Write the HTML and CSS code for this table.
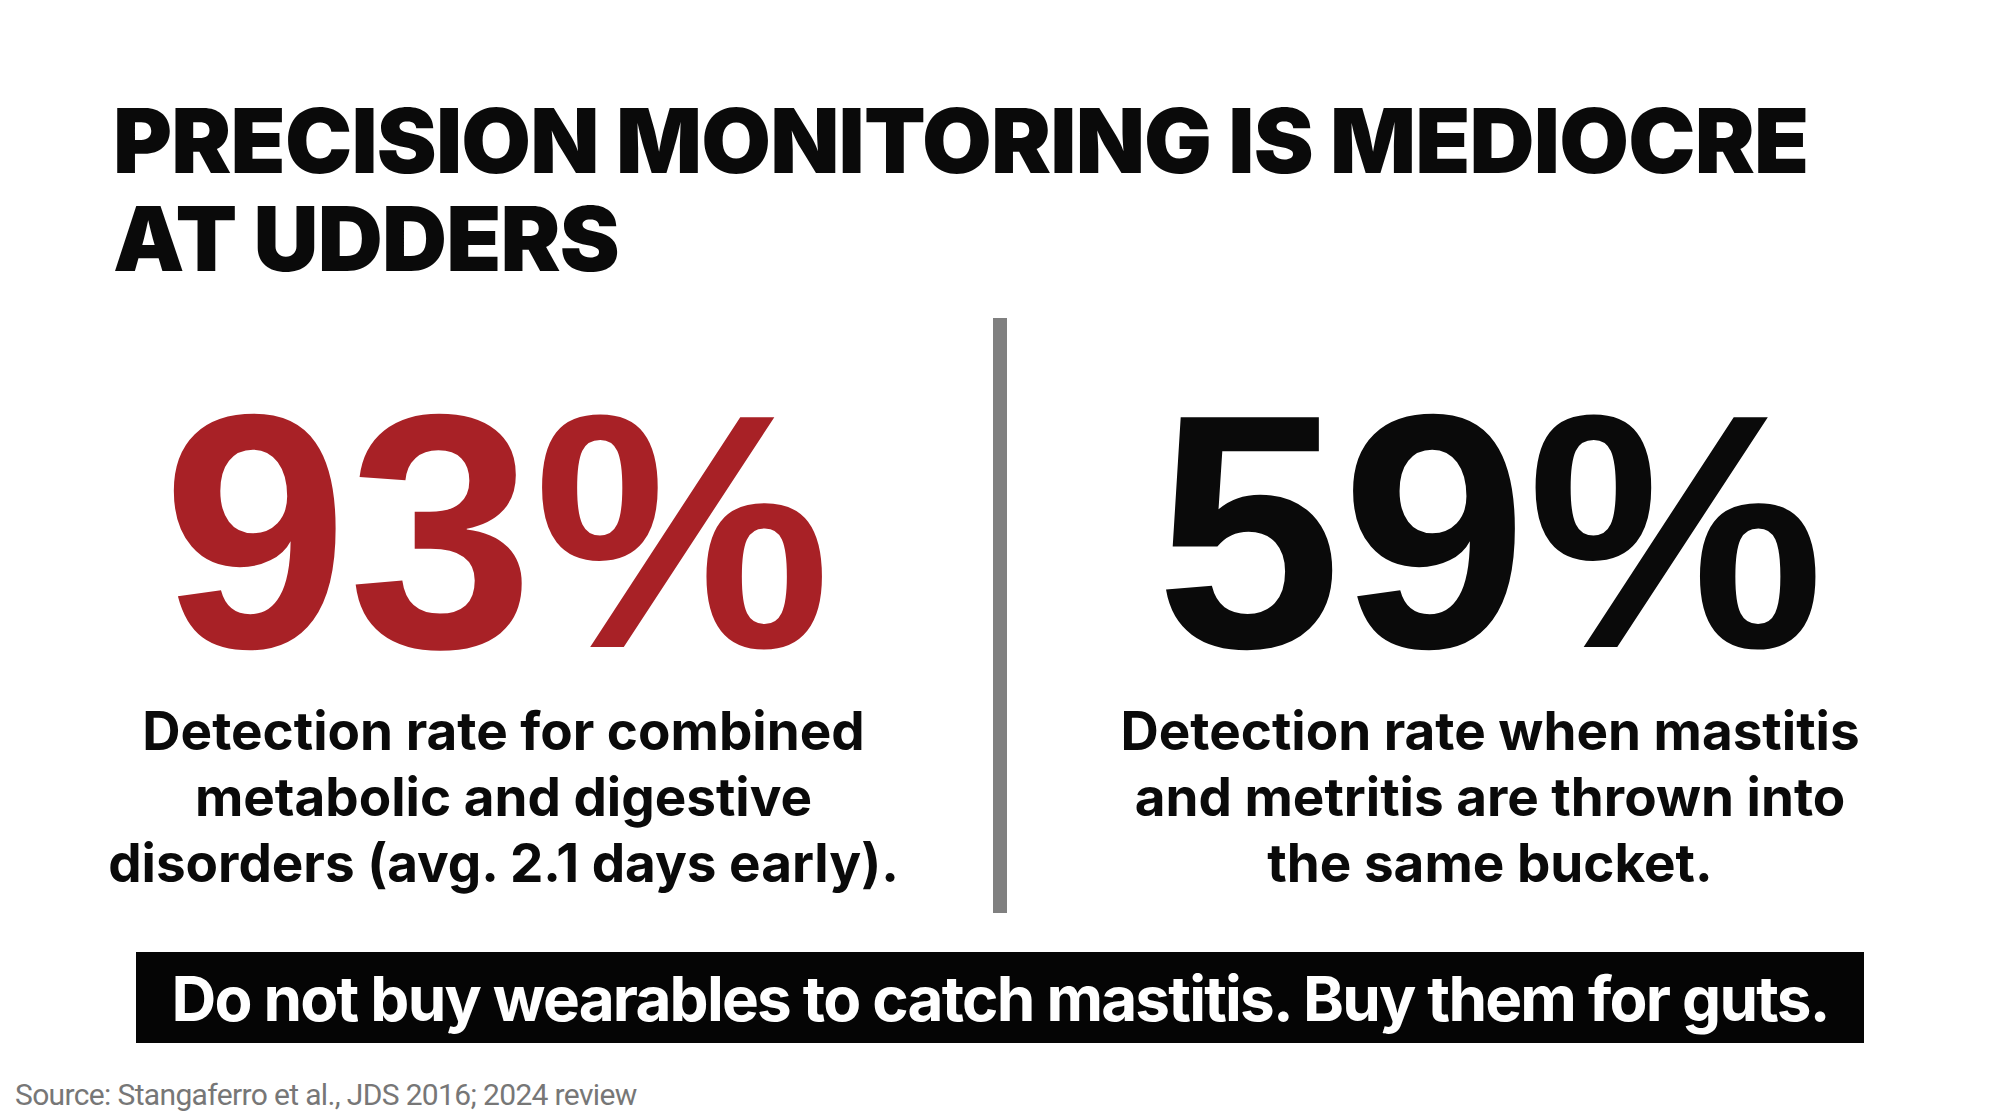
FILE: index.html
```html
<!DOCTYPE html>
<html lang="en">
<head>
<meta charset="utf-8">
<title>Precision monitoring is mediocre at udders</title>
<link rel="stylesheet" href="styles.css">
</head>
<body>
<main class="slide">
  <h1 class="title">PRECISION MONITORING IS MEDIOCRE<br>AT UDDERS</h1>
  <section class="stats">
    <div class="stat">
      <div class="stat-value stat-value--red">93%</div>
      <p class="stat-desc stat-desc--left">Detection rate for combined<br>metabolic and digestive<br>disorders (avg. 2.1 days early).</p>
    </div>
    <div class="divider"></div>
    <div class="stat">
      <div class="stat-value">59%</div>
      <p class="stat-desc">Detection rate when mastitis<br>and metritis are thrown into<br>the same bucket.</p>
    </div>
  </section>
  <div class="callout">Do not buy wearables to catch mastitis. Buy them for guts.</div>
  <p class="source">Source: Stangaferro et al., JDS 2016; 2024 review</p>
</main>
</body>
</html>
```
FILE: styles.css
```css
html, body {
  margin: 0;
  padding: 0;
  background: #ffffff;
}

.slide {
  width: 2000px;
  height: 1116px;
  overflow: hidden;
  display: flex;
  flex-direction: column;
  font-family: Inter, "Liberation Sans", sans-serif;
  color: #0a0a0a;
}

.title {
  margin: 92px 0 0 113px;
  font-family: Inter, "Liberation Sans", sans-serif;
  font-weight: 900;
  font-size: 90px;
  line-height: 98px;
  letter-spacing: -0.8px;
  color: #0a0a0a;
}

.stats {
  margin-top: 30px;
  display: grid;
  grid-template-columns: 993px 14px 966px;
  height: 595px;
}

.stat {
  display: flex;
  flex-direction: column;
  align-items: center;
  padding-top: 54px;
}

.stat-value {
  font-family: "Liberation Sans", Arial, sans-serif;
  font-weight: 700;
  font-size: 334px;
  line-height: 320px;
  letter-spacing: 0;
  color: #0a0a0a;
}

.stat-value--red {
  color: #a82126;
}

.stat-desc {
  margin: 6px 0 0;
  text-align: center;
  font-weight: 700;
  font-size: 53px;
  line-height: 66px;
  letter-spacing: 0;
  white-space: nowrap;
}

.stat-desc--left {
  padding-left: 14px;
}

.divider {
  background: #808080;
}

.callout {
  margin: 39px auto 0;
  width: 1728px;
  height: 91px;
  box-sizing: border-box;
  padding-top: 2px;
  background: #050505;
  color: #ffffff;
  text-align: center;
  white-space: nowrap;
  font-weight: 700;
  font-size: 62px;
  line-height: 89px;
  letter-spacing: -1.8px;
}

.source {
  margin: 34px 0 0 15px;
  font-family: Roboto, "Liberation Sans", sans-serif;
  font-size: 30px;
  line-height: 36px;
  letter-spacing: -0.65px;
  color: #777777;
}
```
